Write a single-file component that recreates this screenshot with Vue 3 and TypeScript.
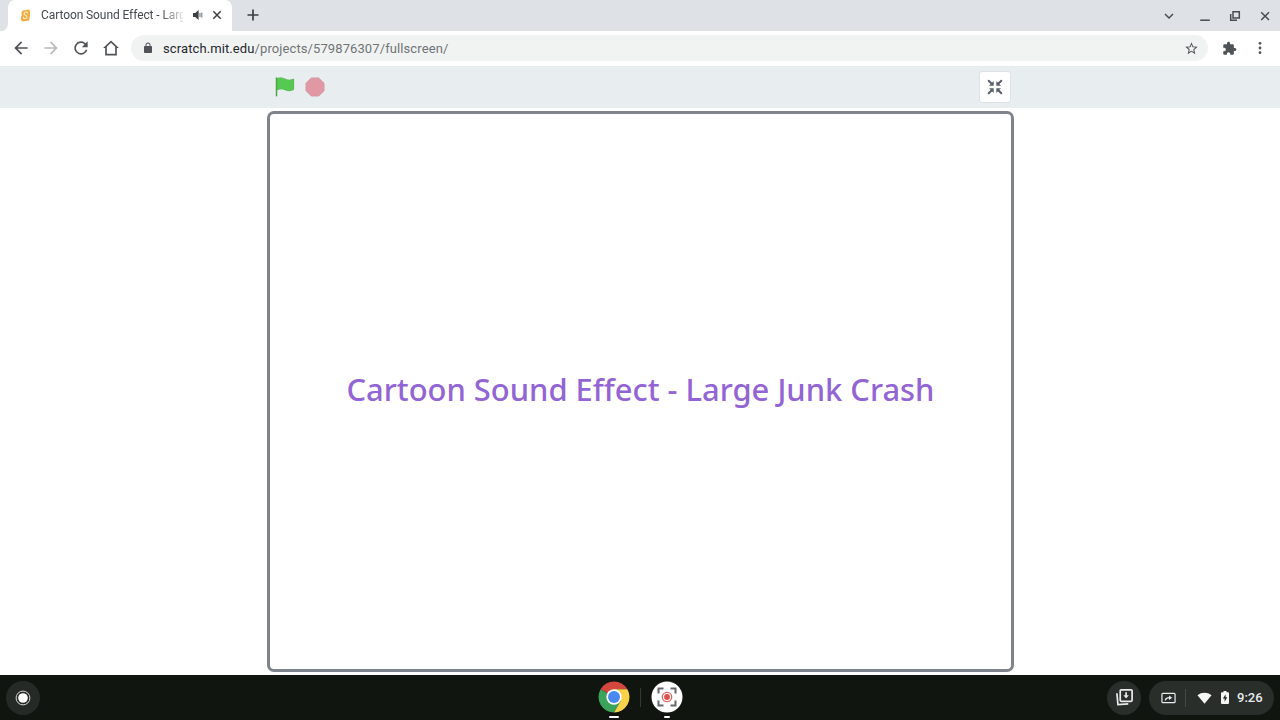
<template>
  <div class="screen">
    <header class="tab-strip">
      <div class="previous-tab"></div>
      <div class="tab">
        <svg class="favicon" viewBox="0 0 12 14">
          <path d="M3 1.5L10 .5 11 2v4l-1 6.5-7 1L1 12V8.5L2 7 1.5 4z" fill="#f3ad42" />
          <path d="M8 4.8V3.5C6.5 2.8 4.4 3.3 4.4 5s3.4 1.7 3.2 3.6C7.4 10.5 5 10.7 3.8 9.8V8.4" fill="none" stroke="#fff1cf" stroke-width="1.1" />
        </svg>
        <span class="tab-title">{{ pageTitle }}</span>
        <svg class="speaker" viewBox="0 0 12 12">
          <path d="M1 4h2.2L6.6 1v10L3.2 8H1z" fill="#3c4043" />
          <path d="M8 4v4M9.8 3.6v4.8" stroke="#777b7e" stroke-width="1.1" />
        </svg>
        <svg class="tab-close" viewBox="0 0 10 10">
          <path d="M1.3 1.3l7.4 7.4M8.7 1.3L1.3 8.7" stroke="#3c4043" stroke-width="1.5" />
        </svg>
      </div>
      <svg class="new-tab" viewBox="0 0 12 12">
        <path d="M6 .5v11M.5 6h11" stroke="#3c4043" stroke-width="1.7" />
      </svg>
      <div class="window-controls">
        <svg viewBox="0 0 12 12"><path d="M2 4l4 4 4-4" /></svg>
        <svg viewBox="0 0 12 12"><path d="M1.2 10.2h9.6" /></svg>
        <svg viewBox="0 0 12 12"><path d="M4 1.7h6.3V8H4zM1.7 4v6.3H8" /></svg>
        <svg viewBox="0 0 12 12"><path d="M2.2 2.2l7.8 7.8M10 2.2L2.2 10" /></svg>
      </div>
    </header>

    <nav class="toolbar">
      <svg v-for="icon in navIcons" :key="icon.name" class="nav-icon" :class="{ disabled: icon.disabled }" viewBox="0 0 24 24">
        <path :d="icon.path" />
      </svg>
      <div class="address-bar">
        <svg class="lock" viewBox="0 0 24 24">
          <path d="M18 8h-1V6c0-2.76-2.24-5-5-5S7 3.24 7 6v2H6c-1.1 0-2 .9-2 2v10c0 1.1.9 2 2 2h12c1.1 0 2-.9 2-2V10c0-1.1-.9-2-2-2zM8.9 8V6a3.1 3.1 0 0 1 6.2 0v2z" />
        </svg>
        <span class="url"><span class="host">scratch.mit.edu</span>/projects/579876307/fullscreen/</span>
        <svg class="star" viewBox="0 0 24 24">
          <path d="M22 9.24l-7.19-.62L12 2 9.19 8.63 2 9.24l5.46 4.73L5.82 21 12 17.27 18.18 21l-1.63-7.03L22 9.24zM12 15.4l-3.76 2.27 1-4.28-3.32-2.88 4.38-.38L12 6.1l1.71 4.04 4.38.38-3.32 2.88 1 4.28L12 15.4z" />
        </svg>
      </div>
      <svg class="extension" viewBox="0 0 24 24">
        <path d="M20.5 11H19V7c0-1.1-.9-2-2-2h-4V3.5C13 2.12 11.88 1 10.5 1S8 2.12 8 3.5V5H4c-1.1 0-1.99.9-1.99 2v3.8H3.5c1.49 0 2.7 1.21 2.7 2.7s-1.21 2.7-2.7 2.7H2V20c0 1.1.9 2 2 2h3.8v-1.5c0-1.49 1.21-2.7 2.7-2.7s2.7 1.21 2.7 2.7V22H17c1.1 0 2-.9 2-2v-4h1.5c1.38 0 2.5-1.12 2.5-2.5S21.88 11 20.5 11z" />
      </svg>
      <svg class="menu" viewBox="0 0 4 14">
        <circle cx="2" cy="2.3" r="1.4" />
        <circle cx="2" cy="7" r="1.4" />
        <circle cx="2" cy="11.7" r="1.4" />
      </svg>
    </nav>

    <div class="stage-header">
      <div class="stage-controls">
        <svg class="green-flag" viewBox="0 0 20 20">
          <path d="M1.5 1.8C6-.2 9 1.6 11 2.5s4.8.9 7.6-.4v10.5c-3 1.5-5.7 1.4-8.1.3-3-1.5-5.8-1.3-9 .2z" fill="#54cb50" stroke="#4db548" stroke-width=".9" />
          <path d="M1.5 1v17.8" stroke="#4ba546" stroke-width="1.5" stroke-linecap="round" />
        </svg>
        <svg class="stop" viewBox="0 0 20 20">
          <path d="M6.3 1h7.4L19 6.3v7.4L13.7 19H6.3L1 13.7V6.3z" fill="#e099a4" stroke="#d797a2" stroke-linejoin="round" />
        </svg>
        <button class="unfullscreen" aria-label="Exit full screen">
          <svg viewBox="0 0 16 16">
            <g v-for="angle in [0, 90, 180, 270]" :key="angle" :transform="`rotate(${angle} 8 8)`">
              <path d="M1.7 1.7L5 5" stroke="#575e6b" stroke-width="2" stroke-linecap="round" />
              <path d="M6.7 2v4.7H2z" fill="#575e6b" />
            </g>
          </svg>
        </button>
      </div>
    </div>

    <main class="stage-area">
      <div class="stage">
        <h1>{{ pageTitle }}</h1>
      </div>
    </main>

    <footer class="shelf">
      <div class="launcher">
        <svg viewBox="0 0 16 16">
          <circle cx="8" cy="8" r="6.9" fill="none" stroke="#d5d8d6" stroke-width="1" />
          <circle cx="8" cy="8" r="4.8" fill="#fff" />
        </svg>
      </div>
      <div class="apps">
        <div class="app">
          <svg viewBox="0 0 32 32">
            <path d="M16 16L2.58 8.25A15.5 15.5 0 0 1 29.42 8.25H16z" fill="#d4473f" />
            <path d="M16 16L2.58 8.25A15.5 15.5 0 0 0 16 31.5l6.7-11.6z" fill="#3ca45a" />
            <path d="M16 8.25h13.42A15.5 15.5 0 0 1 16 31.5l6.7-11.6z" fill="#f8d34a" />
            <circle cx="16" cy="16" r="7.7" fill="#fff" />
            <circle cx="16" cy="16" r="6" fill="#4a8af0" />
          </svg>
          <span class="indicator"></span>
        </div>
        <span class="app-divider"></span>
        <div class="app">
          <svg viewBox="0 0 32 32">
            <circle cx="16" cy="16" r="15.5" fill="#fff" />
            <path d="M7.5 12.5v-5h5M19.5 7.5h5v5M24.5 19.5v5h-5M12.5 24.5h-5v-5" fill="none" stroke="#64686b" stroke-width="2" />
            <circle cx="16" cy="16" r="4.7" fill="none" stroke="#df6862" stroke-width="1.3" />
            <circle cx="16" cy="16" r="2.9" fill="#df5049" />
          </svg>
          <span class="indicator short"></span>
        </div>
      </div>
      <div class="status-area">
        <div class="downloads">
          <svg viewBox="0 0 20 20" fill="none" stroke="#e8eaed" stroke-width="1.8">
            <rect x="5.5" y="2" width="12.5" height="12" rx="1" />
            <path d="M2 5.5L3.1 17.5l10.9-.8" />
            <path d="M11.7 4.5V9" />
            <path d="M8.8 7.5h5.8l-2.9 3.6z" fill="#e8eaed" stroke="none" />
          </svg>
        </div>
        <div class="tray">
          <svg class="cast" viewBox="0 0 16 12" fill="none" stroke="#e8eaed">
            <rect x="1" y="1" width="14" height="10" rx="1" stroke-width="1.3" />
            <path d="M4.5 8.5c.5-2 2-3 4.5-3" stroke-width="1.4" />
            <path d="M8.5 3.2L12 5.7 8.5 8.2z" fill="#e8eaed" stroke="none" />
          </svg>
          <span class="tray-divider"></span>
          <svg class="wifi" viewBox="0 0 16 12">
            <path d="M8 12L.5 3C4.8-.5 11.2-.5 15.5 3z" fill="#f5f6f6" />
          </svg>
          <svg class="battery" viewBox="0 0 8 13">
            <path d="M2.5 0h3v1.2H7q1 0 1 1V12q0 1-1 1H1q-1 0-1-1V2.2q0-1 1-1h1.5z" fill="#f5f6f6" />
            <path d="M4.6 3.2L1.9 7.6h1.7v3.2l2.7-4.6H4.6z" fill="#252b28" />
          </svg>
          <time>9:26</time>
        </div>
      </div>
    </footer>
  </div>
</template>

<script setup lang="ts">
interface NavIcon {
  name: string
  path: string
  disabled?: boolean
}

const pageTitle = 'Cartoon Sound Effect - Large Junk Crash'

const navIcons: NavIcon[] = [
  { name: 'back', path: 'M20 11H7.83l5.59-5.59L12 4l-8 8 8 8 1.41-1.41L7.83 13H20z' },
  { name: 'forward', path: 'M12 4l-1.41 1.41L16.17 11H4v2h12.17l-5.58 5.59L12 20l8-8z', disabled: true },
  { name: 'reload', path: 'M17.65 6.35A8 8 0 1 0 19.73 14h-2.08A6 6 0 1 1 16.22 7.78L13 11h7V4z' },
  { name: 'home', path: 'M12 3L2.5 12H5v9h14v-9h2.5zM12 5.7l5 4.8V19H7v-8.5z' }
]
</script>

<style>
body {
  margin: 0;
  overflow: hidden;
}
</style>

<style scoped>
* {
  box-sizing: border-box;
}

.screen {
  width: 1280px;
  height: 720px;
  display: flex;
  flex-direction: column;
  background: #fff;
  font-family: Roboto, sans-serif;
}

svg {
  display: block;
  flex-shrink: 0;
}

.tab-strip {
  height: 31px;
  display: flex;
  align-items: center;
  background: #dee1e5;
}

.previous-tab {
  width: 8px;
  height: 31px;
  border-bottom-right-radius: 7px;
  background: #dee1e5;
  box-shadow: 4px 5px 0 #fff;
  clip-path: inset(0);
}

.tab {
  width: 224px;
  height: 31px;
  display: flex;
  align-items: center;
  padding: 0 0 1px 12px;
  border-radius: 7px 7px 0 0;
  background: #fff;
}

.favicon {
  width: 11px;
  height: 13px;
}

.tab-title {
  width: 142px;
  margin-left: 10px;
  overflow: hidden;
  white-space: nowrap;
  font-size: 12px;
  letter-spacing: -0.09px;
  line-height: 20px;
  color: #45494d;
  mask-image: linear-gradient(90deg, #000 120px, transparent 146px);
}

.speaker {
  width: 12px;
  height: 12px;
  margin-left: 9px;
}

.tab-close {
  width: 10px;
  height: 10px;
  margin-left: 8px;
}

.new-tab {
  width: 12px;
  height: 12px;
  margin: 0 0 1px 15px;
}

.window-controls {
  display: flex;
  gap: 18px;
  margin-left: auto;
  padding-right: 9px;
}

.window-controls svg {
  width: 12px;
  height: 12px;
  fill: none;
  stroke: #484c50;
  stroke-width: 1.5;
}

.window-controls svg:first-child {
  margin-right: 6px;
}

.toolbar {
  height: 36px;
  display: flex;
  align-items: center;
  padding: 0 0 1px 10.5px;
  border-bottom: 1px solid #e5eaea;
}

.nav-icon {
  width: 20px;
  height: 20px;
  margin-right: 10px;
  fill: #505357;
}

.nav-icon.disabled {
  fill: #b9bbbe;
}

.address-bar {
  width: 1077px;
  height: 26px;
  display: flex;
  align-items: center;
  margin-left: 0.5px;
  padding: 0 9px 0 11px;
  border-radius: 13px;
  background: #f1f3f3;
}

.lock {
  width: 12px;
  height: 12px;
  fill: #505357;
}

.url {
  margin-left: 9px;
  font-size: 13px;
  letter-spacing: 0.1px;
  color: #707476;
}

.host {
  color: #25282b;
}

.star {
  width: 15px;
  height: 15px;
  margin-left: auto;
  fill: #505357;
}

.extension {
  width: 15px;
  height: 15px;
  margin-left: 14px;
  fill: #505357;
}

.menu {
  width: 4px;
  height: 14px;
  margin-left: 21px;
  fill: #505357;
}

.stage-header {
  height: 41px;
  background: #e8edf0;
}

.stage-controls {
  width: 746px;
  height: 40px;
  display: flex;
  align-items: center;
  margin: 0 auto;
  padding: 0 2px 0 8px;
}

.green-flag {
  width: 20px;
  height: 20px;
}

.stop {
  width: 20px;
  height: 20px;
  margin-left: 10px;
}

.unfullscreen {
  width: 32px;
  height: 32px;
  display: flex;
  align-items: center;
  justify-content: center;
  margin-left: auto;
  padding: 0;
  border: 1px solid #dce2e5;
  border-radius: 3px;
  background: #fff;
}

.unfullscreen svg {
  width: 16px;
  height: 16px;
}

.stage-area {
  height: 567px;
  padding-top: 3px;
}

.stage {
  width: 747px;
  height: 561px;
  display: flex;
  align-items: center;
  justify-content: center;
  margin: 0 auto;
  padding: 0 0 6px 1px;
  border: 3px solid #7f838c;
  border-radius: 7px;
  background: #fff;
}

h1 {
  margin: 0;
  white-space: nowrap;
  font-family: "Noto Sans", sans-serif;
  font-size: 30.9px;
  font-weight: 500;
  line-height: 42px;
  color: #9364d3;
}

.shelf {
  height: 45px;
  display: grid;
  grid-template-columns: 1fr auto 1fr;
  align-items: center;
  background: #101510;
}

.launcher {
  width: 34px;
  height: 34px;
  display: flex;
  align-items: center;
  justify-content: center;
  margin-left: 5.5px;
  border-radius: 50%;
  background: #252a27;
}

.launcher svg {
  width: 16px;
  height: 16px;
}

.apps {
  display: flex;
  align-items: center;
  gap: 10px;
}

.app {
  height: 45px;
  display: flex;
  flex-direction: column;
  align-items: center;
  padding-top: 6px;
}

.app svg {
  width: 32px;
  height: 32px;
}

.indicator {
  width: 10px;
  height: 2px;
  margin-top: 3px;
  border-radius: 1px;
  background: #fff;
}

.indicator.short {
  width: 6px;
}

.app-divider {
  width: 1px;
  height: 19px;
  background: #343936;
}

.status-area {
  display: flex;
  justify-content: flex-end;
  gap: 8px;
  padding-right: 6px;
}

.downloads {
  width: 34px;
  height: 34px;
  display: flex;
  align-items: center;
  justify-content: center;
  border-radius: 50%;
  background: #292e2b;
}

.downloads svg {
  width: 19px;
  height: 19px;
}

.tray {
  width: 125px;
  height: 34px;
  display: flex;
  align-items: center;
  padding-left: 12px;
  border-radius: 17px;
  background: #292e2b;
}

.cast {
  width: 15px;
  height: 12px;
}

.tray-divider {
  width: 1px;
  height: 18px;
  margin-left: 9px;
  background: #454a47;
}

.wifi {
  width: 15px;
  height: 12px;
  margin-left: 11px;
}

.battery {
  width: 8px;
  height: 13px;
  margin-left: 9px;
}

time {
  margin-left: 8px;
  font-size: 13px;
  font-weight: 500;
  color: #e8eaed;
}
</style>
